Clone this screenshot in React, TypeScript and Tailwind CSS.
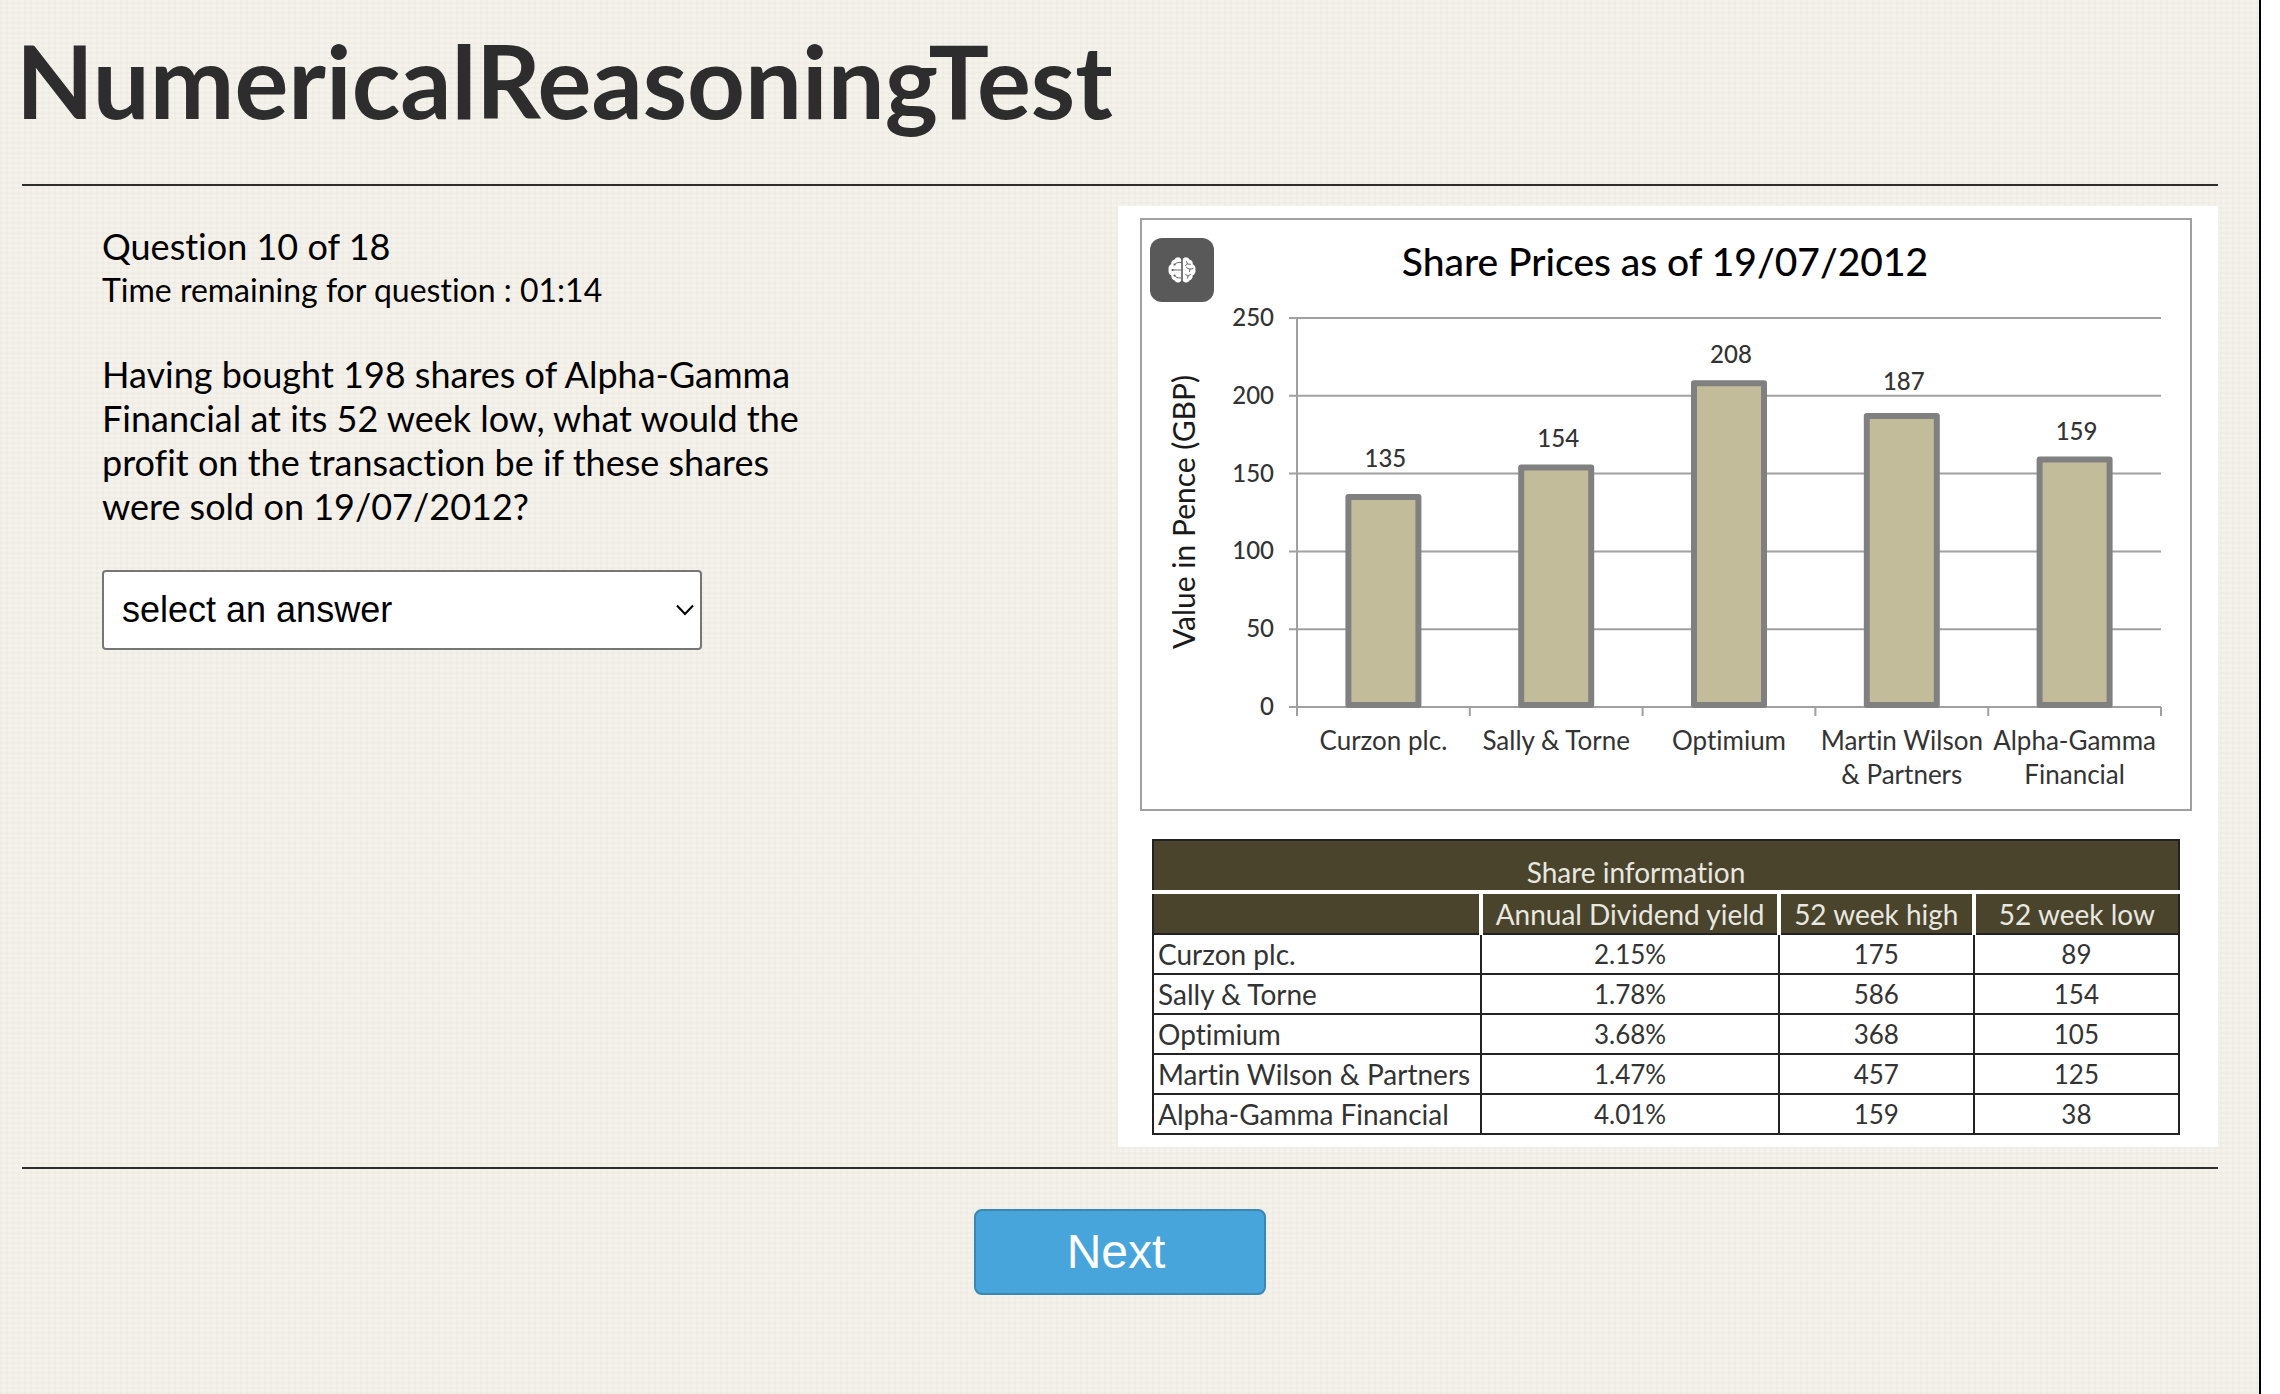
import React, { useState } from "react";

interface ShareRow {
    name: string;
    labelLines: string[];
    price: number;
    labelGap: number;
    dividendYield: string;
    high: number;
    low: number;
}

const shares: ShareRow[] = [
    { name: "Curzon plc.", labelLines: ["Curzon plc."], price: 135, labelGap: 30, dividendYield: "2.15%", high: 175, low: 89 },
    { name: "Sally & Torne", labelLines: ["Sally & Torne"], price: 154, labelGap: 20, dividendYield: "1.78%", high: 586, low: 154 },
    { name: "Optimium", labelLines: ["Optimium"], price: 208, labelGap: 20, dividendYield: "3.68%", high: 368, low: 105 },
    { name: "Martin Wilson & Partners", labelLines: ["Martin Wilson", "& Partners"], price: 187, labelGap: 26, dividendYield: "1.47%", high: 457, low: 125 },
    { name: "Alpha-Gamma Financial", labelLines: ["Alpha-Gamma", "Financial"], price: 159, labelGap: 20, dividendYield: "4.01%", high: 159, low: 38 },
];

const ticks = [250, 200, 150, 100, 50, 0];

// Plot area inside the chart's viewBox
const PLOT = { left: 157, right: 1021, top: 100, bottom: 489 };
const SLOT = (PLOT.right - PLOT.left) / shares.length;
const yFor = (value: number) => PLOT.bottom - (value / 250) * (PLOT.bottom - PLOT.top);

function SharePriceChart() {
    return (
        <svg viewBox="0 0 1052 593" className="block w-full" role="img" aria-label="Share Prices as of 19/07/2012">
            <rect x="1" y="1" width="1050" height="591" fill="#fff" stroke="#a0a0a0" strokeWidth="2" />
            <text x="525" y="58" textAnchor="middle" className="fill-black text-[39px] font-medium">
                Share Prices as of 19/07/2012
            </text>
            <text transform="translate(55 294) rotate(-90)" textAnchor="middle" className="fill-[#1a1a1a] text-[30px]">
                Value in Pence (GBP)
            </text>

            {ticks.map((tick) => (
                <g key={tick}>
                    <line x1={PLOT.left - 8} x2={PLOT.right} y1={yFor(tick)} y2={yFor(tick)} stroke="#a0a0a0" strokeWidth="2" />
                    <text x="134" y={yFor(tick) + 8} textAnchor="end" className="fill-[#333] text-[24px] font-medium">
                        {tick}
                    </text>
                </g>
            ))}

            <line x1={PLOT.left} x2={PLOT.left} y1={PLOT.top} y2={PLOT.bottom + 9} stroke="#a0a0a0" strokeWidth="2" />

            {shares.map((share, i) => {
                const center = PLOT.left + SLOT * (i + 0.5);
                const top = yFor(share.price);
                return (
                    <g key={share.name}>
                        <line x1={center + SLOT / 2} x2={center + SLOT / 2} y1={PLOT.bottom} y2={PLOT.bottom + 9} stroke="#a0a0a0" strokeWidth="2" />
                        <rect
                            x={center - 35}
                            y={top}
                            width="70"
                            height={PLOT.bottom - top - 2}
                            fill="#c3bc9a"
                            stroke="#808080"
                            strokeWidth="6"
                            strokeLinejoin="round"
                        />
                        <text x={center + 2} y={top - share.labelGap} textAnchor="middle" className="fill-[#333] text-[24px] font-medium">
                            {share.price}
                        </text>
                        {share.labelLines.map((line, n) => (
                            <text key={line} x={center} y={532 + n * 34} textAnchor="middle" className="fill-[#333] text-[26px]">
                                {line}
                            </text>
                        ))}
                    </g>
                );
            })}
        </svg>
    );
}

function ShareTable() {
    return (
        <table className="w-full table-fixed border-collapse border-2 border-[#222] text-[26px] leading-[34px] text-[#333]">
            <colgroup>
                <col className="w-[32%]" />
                <col className="w-[29%]" />
                <col className="w-[19%]" />
                <col className="w-[20%]" />
            </colgroup>
            <thead className="bg-[#4a442c] text-[28px] text-[#e8e8e0]">
                <tr className="h-[52px]">
                    <th colSpan={4} className="border-b-4 border-white pt-3 pr-[60px] font-normal">Share information</th>
                </tr>
                <tr className="h-[42px]">
                    <th className="border-r-4 border-white" aria-label="Company" />
                    <th className="border-r-4 border-white whitespace-nowrap font-normal">Annual Dividend yield</th>
                    <th className="border-r-4 border-white whitespace-nowrap font-normal">52 week high</th>
                    <th className="whitespace-nowrap font-normal">52 week low</th>
                </tr>
            </thead>
            <tbody>
                {shares.map((share) => (
                    <tr key={share.name} className="h-10 text-center">
                        <td className="border-2 border-[#222] pl-1 text-left text-[28px] whitespace-nowrap">{share.name}</td>
                        <td className="border-2 border-[#222]">{share.dividendYield}</td>
                        <td className="border-2 border-[#222]">{share.high}</td>
                        <td className="border-2 border-[#222]">{share.low}</td>
                    </tr>
                ))}
            </tbody>
        </table>
    );
}

function BrainIcon() {
    return (
        <svg viewBox="0 0 28 28" className="size-7" aria-hidden="true">
            <path fill="#fff" d="M13.200 3.500v21c-.8 2.400-4.800 2.900-6.600-.1C4.500 24.200 3 22 3.400 19.600 1 18.500 0 16 .6 13.500 0 11 1.500 8.800 3.200 8.200 3 5.500 4.500 3.800 6.600 3.500 8 .4 12.400.6 13.200 3.500Z" />
            <path fill="#fff" d="M14.800 3.500v21c.8 2.400 4.800 2.900 6.600-.1 2.100-.2 3.600-2.400 3.200-4.800 2.400-1.100 3.400-3.600 2.800-6.100.6-2.500-.9-4.700-2.600-5.300.2-2.700-1.300-4.400-3.400-4.700C20 .4 15.600.6 14.800 3.500Z" />
            <g fill="none" stroke="#595959" strokeWidth="0.9" strokeLinecap="round">
                <path d="M13 6.500c-3-.4-5.200.3-6.300 1.800M4.500 14H13M13 22c-3.400.2-5.200-.8-6.300-2.200" />
                <path d="M18.500 5.500l1 2.500 3 .3M19.500 8l-2 1.500M18.500 11.500c2 1.800 4 2.200 6.500 1M22 13l-.5 2.500M17.500 18.500l2.500 1.500 2.500-1.500M20 20l-.3 2.200" />
            </g>
            <g fill="#595959">
                <circle cx="6.600" cy="8.500" r="1.100" />
                <circle cx="4.600" cy="14" r="1.100" />
                <circle cx="6.600" cy="19.500" r="1.100" />
            </g>
        </svg>
    );
}

export default function App() {
    const [answer, setAnswer] = useState("");

    return (
        <div className="flex min-h-screen bg-white font-[Lato,sans-serif] text-black [font-variant-ligatures:no-common-ligatures]">
            {/* the two gradients weave the linen background */}
            <main className="min-w-0 flex-1 border-r-2 border-black bg-[#f5f2ec] bg-[repeating-linear-gradient(0deg,rgba(90,80,60,0.025)_0px_2px,transparent_2px_5px),repeating-linear-gradient(90deg,rgba(90,80,60,0.025)_0px_2px,transparent_2px_6px)] pr-[41px] pl-[22px]">
                <header className="border-b-2 border-[#2d2d2d] pt-5 pb-11">
                    <h1 className="-ml-1.5 text-[101px] leading-[120px] font-bold text-[#2d2d2d]">NumericalReasoningTest</h1>
                </header>

                <div className="flex items-start justify-between border-b-2 border-[#2d2d2d] py-5">
                    <section className="w-[840px] pt-[18px] pl-20 text-[36px] leading-[44px]">
                        <p>Question 10 of 18</p>
                        <p className="text-[32px]">Time remaining for question : 01:14</p>
                        <label htmlFor="answer" className="mt-10 block w-[720px]">
                            Having bought 198 shares of Alpha-Gamma Financial at its 52 week low, what would the profit on the transaction be if these shares were sold on 19/07/2012?
                        </label>
                        <div className="relative mt-[42px] w-[600px]">
                            <select
                                id="answer"
                                value={answer}
                                onChange={(e) => setAnswer(e.target.value)}
                                className="block h-20 w-full appearance-none rounded border-2 border-[#767676] bg-white px-[18px] font-['Liberation_Sans',sans-serif] text-[36px]"
                            >
                                <option value="">select an answer</option>
                            </select>
                            <svg viewBox="0 0 18 12" className="pointer-events-none absolute top-[34px] right-2 h-3 w-[18px]" fill="none" stroke="#000" strokeWidth="2">
                                <path d="M1 1.500 9 10l8-8.500" />
                            </svg>
                        </div>
                    </section>

                    <section className="relative w-[51%] max-w-[1100px] bg-white pt-3 pr-[26px] pb-3 pl-[22px]">
                        <SharePriceChart />
                        <div className="mx-3 mt-7">
                            <ShareTable />
                        </div>
                        <button type="button" aria-label="Brain tools" className="absolute top-8 left-8 flex size-16 items-center justify-center rounded-xl bg-[#595959]">
                            <BrainIcon />
                        </button>
                    </section>
                </div>

                <div className="flex justify-center pt-10">
                    <button type="button" className="h-[86px] w-[292px] rounded-lg border-2 border-[#3a87b3] bg-[#47a5db] pr-2 font-['Liberation_Sans',sans-serif] text-[48px] text-white">
                        Next
                    </button>
                </div>
            </main>
            <div className="w-[19px]" />
        </div>
    );
}
